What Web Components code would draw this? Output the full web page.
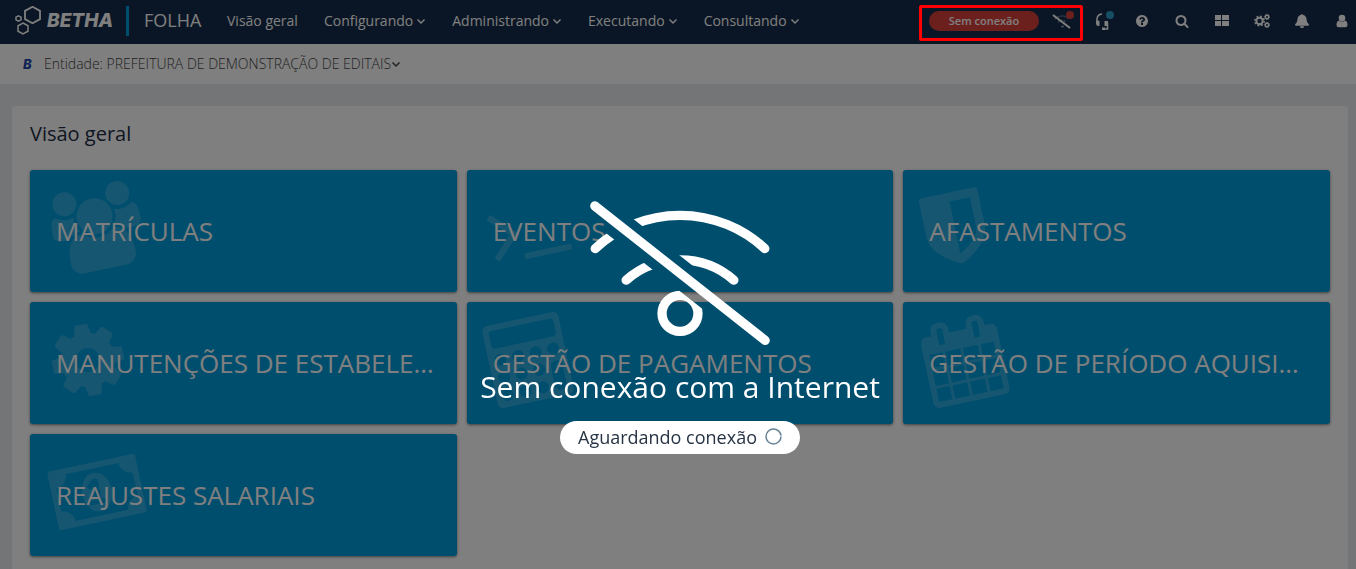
<!DOCTYPE html>
<html lang="pt-BR">
<head>
<meta charset="utf-8">
<meta name="viewport" content="width=device-width, initial-scale=1">
<title>Betha Folha</title>
<style>
  html, body { margin: 0; height: 100%; }
  body { font-family: "Open Sans", "Noto Sans", sans-serif; font-size: 14px; overflow: hidden; }
</style>
</head>
<body>
<folha-app></folha-app>

<script>
const ICONS = {
  users: ['0 0 1920 1792', '<path d="M593 896q-162 5-265 128h-134q-82 0-138-40.5t-56-118.5q0-353 124-353 6 0 43.500 21t97.500 42.500 119 21.500q67 0 133-23-5 37-5 66 0 139 81 256zm1071 637q0 120-73 189.500t-194 69.500h-874q-121 0-194-69.500t-73-189.500q0-53 3.500-103.500t14-109 26.500-108.500 43-97.500 62-81 85.500-53.500 111.500-20q10 0 43 21.500t73 48 107 48 135 21.500 135-21.500 107-48 73-48 43-21.500q61 0 111.500 20t85.500 53.500 62 81 43 97.500 26.500 108.500 14 109 3.500 103.500zm-1024-1277q0 106-75 181t-181 75-181-75-75-181 75-181 181-75 181 75 75 181zm704 384q0 159-112.500 271.500t-271.500 112.500-271.500-112.500-112.500-271.500 112.500-271.500 271.500-112.500 271.500 112.500 112.500 271.500zm576 225q0 78-56 118.500t-138 40.500h-134q-103-123-265-128 81-117 81-256 0-29-5-66 66 23 133 23 59 0 119-21.500t97.500-42.500 43.500-21q124 0 124 353zm-128-609q0 106-75 181t-181 75-181-75-75-181 75-181 181-75 181 75 75 181z"/>'],
  cog: ['128 0 1536 1792', '<path d="M1152 896q0-106-75-181t-181-75-181 75-75 181 75 181 181 75 181-75 75-181zm512-109v222q0 12-8 23t-20 13l-185 28q-19 54-39 91 35 50 107 138 10 12 10 25t-9 23q-27 37-99 108t-94 71q-12 0-26-9l-138-108q-44 23-91 38-16 136-29 186-7 28-36 28h-222q-14 0-24.500-8.500t-11.500-21.500l-28-184q-49-16-90-37l-141 107q-10 9-25 9-14 0-25-11-126-114-165-168-7-10-7-23 0-12 8-23 15-21 51-66.500t54-70.500q-27-50-41-99l-183-27q-13-2-21-12.500t-8-23.500v-222q0-12 8-23t19-13l186-28q14-46 39-92-40-57-107-138-10-12-10-24 0-10 9-23 26-36 98.500-107.500t94.500-71.500q13 0 26 10l138 107q44-23 91-38 16-136 29-186 7-28 36-28h222q14 0 24.500 8.500t11.500 21.500l28 184q49 16 90 37l142-107q9-9 24-9 13 0 25 10 129 119 165 170 7 8 7 22 0 12-8 23-15 21-51 66.500t-54 70.500q26 50 41 98l183 28q13 2 21 12.500t8 23.500z"/>'],
  shield: ['256 0 1280 1792', '<path d="M1344 960v-640h-448v1137q119-63 213-137 235-184 235-360zm192-768v768q0 86-33.500 170.500t-83 150-118 127.500-126.500 103-121 77.500-89.500 49.500-42.500 20q-12 6-26 6t-26-6q-16-7-42.500-20t-89.500-49.500-121-77.500-126.500-103-118-127.500-83-150-33.500-170.500v-768q0-26 19-45t45-19h1152q26 0 45 19t19 45z"/>'],
  terminal: ['64 0 1664 1792', '<path d="M649 983l-466 466q-10 10-23 10t-23-10l-50-50q-10-10-10-23t10-23l393-393-393-393q-10-10-10-23t10-23l50-50q10-10 23-10t23 10l466 466q10 10 10 23t-10 23zm1079 457v64q0 14-9 23t-23 9h-960q-14 0-23-9t-9-23v-64q0-14 9-23t23-9h960q14 0 23 9t9 23z"/>'],
  calculator: ['0 0 1664 1792', '<path fill-rule="evenodd" d="M128 0h1408a128 128 0 0 1 128 128v1536a128 128 0 0 1-128 128h-1408a128 128 0 0 1-128-128v-1536a128 128 0 0 1 128-128zM192 128a64 64 0 0 0-64 64v256a64 64 0 0 0 64 64h1280a64 64 0 0 0 64-64v-256a64 64 0 0 0-64-64zM128 768a128 128 0 0 0 256 0a128 128 0 0 0-256 0zM512 768a128 128 0 0 0 256 0a128 128 0 0 0-256 0zM896 768a128 128 0 0 0 256 0a128 128 0 0 0-256 0zM1280 768a128 128 0 0 0 256 0a128 128 0 0 0-256 0zM128 1152a128 128 0 0 0 256 0a128 128 0 0 0-256 0zM512 1152a128 128 0 0 0 256 0a128 128 0 0 0-256 0zM896 1152a128 128 0 0 0 256 0a128 128 0 0 0-256 0zM128 1536a128 128 0 0 0 256 0a128 128 0 0 0-256 0zM512 1536a128 128 0 0 0 256 0a128 128 0 0 0-256 0zM896 1536a128 128 0 0 0 256 0a128 128 0 0 0-256 0zM1280 1152v384a128 128 0 0 0 256 0v-384a128 128 0 0 0-256 0z"/>'],
  calendar: ['64 0 1664 1792', '<path d="M192 1664h288v-288h-288v288zm352 0h320v-288h-320v288zm-352-352h288v-320h-288v320zm352 0h320v-320h-320v320zm-352-384h288v-288h-288v288zm736 736h320v-288h-320v288zm-384-736h320v-288h-320v288zm768 736h288v-288h-288v288zm-384-352h320v-320h-320v320zm-352-864v-288q0-13-9.500-22.500t-22.500-9.500h-64q-13 0-22.500 9.500t-9.500 22.500v288q0 13 9.500 22.500t22.500 9.500h64q13 0 22.500-9.500t9.500-22.500zm736 864h288v-320h-288v320zm-384-384h320v-288h-320v288zm384 0h288v-288h-288v288zm32-480v-288q0-13-9.500-22.500t-22.500-9.500h-64q-13 0-22.500 9.500t-9.500 22.500v288q0 13 9.500 22.500t22.500 9.500h64q13 0 22.500-9.500t9.500-22.500zm384-64v1280q0 52-38 90t-90 38h-1408q-52 0-90-38t-38-90v-1280q0-52 38-90t90-38h128v-96q0-66 47-113t113-47h64q66 0 113 47t47 113v96h384v-96q0-66 47-113t113-47h64q66 0 113 47t47 113v96h128q52 0 90 38t38 90z"/>'],
  money: ['0 0 1920 1792', '<path d="M768 1152h384v-96h-128v-448h-114l-148 137 77 80q42-37 55-57h2v288h-128v96zm512-256q0 70-21 142t-59.500 134-101.500 101-138 39-138-39-101.500-101-59.500-134-21-142 21-142 59.500-134 101.500-101 138-39 138 39 101.500 101 59.500 134 21 142zm512 256v-512q-106 0-181-75t-75-181h-1152q0 106-75 181t-181 75v512q106 0 181 75t75 181h1152q0-106 75-181t181-75zm128-832v1152q0 26-19 45t-45 19h-1792q-26 0-45-19t-19-45v-1152q0-26 19-45t45-19h1792q26 0 45 19t19 45z"/>'],
  chevron: ['0 0 10 10', '<path d="M1.500 3.500L5 7l3.500-3.500" fill="none" stroke="currentColor" stroke-width="1.500"/>'],
  offline: ['0 0 20 20', '<g fill="none" stroke="currentColor"><path d="M3 8q7-6 14 0M6 11q4-3 8 0" stroke-width="1.500" stroke-dasharray="2 1" opacity=".4"/><path d="M9 15.500h3" stroke-width="1.500" opacity=".5"/><path d="M1 4l17 13" stroke-width="2"/></g>'],
  headset: ['0 0 20 20', '<path d="M5 11V8.500q0-5 5-5.500M15.500 12v6H11" fill="none" stroke="currentColor" stroke-width="1.500"/><path d="M4 9.500h1.500l2 .5v5H6q-2-.5-2-2.500zM12.500 10H16v3q0 2-1.500 2h-2zM10 16.500h3V19h-3z" fill="currentColor"/>'],
  help: ['0 0 1792 1792', '<path fill="currentColor" d="M1024 1376v-192q0-14-9-23t-23-9h-192q-14 0-23 9t-9 23v192q0 14 9 23t23 9h192q14 0 23-9t9-23zm256-672q0-88-55.500-163t-138.500-116-170-41q-243 0-371 213-15 24 8 42l132 100q7 6 19 6 16 0 25-12 53-68 86-92 34-24 86-24 48 0 85.500 26t37.500 59q0 38-20 61t-68 45q-63 28-115.500 86.500t-52.500 125.500v36q0 14 9 23t23 9h192q14 0 23-9t9-23q0-19 21.500-49.500t54.500-49.500q32-18 49-28.500t46-35 44.500-48 28-60.500 12.500-81zm384 192q0 209-103 385.500t-279.500 279.500-385.500 103-385.500-103-279.500-279.500-103-385.500 103-385.500 279.500-279.500 385.500-103 385.500 103 279.500 279.500 103 385.500z"/>'],
  search: ['0 0 1792 1792', '<path fill="currentColor" d="M1216 832q0-185-131.500-316.500t-316.500-131.500-316.500 131.500-131.500 316.500 131.500 316.500 316.500 131.500 316.500-131.500 131.500-316.500zm512 832q0 52-38 90t-90 38q-54 0-90-38l-343-342q-179 124-399 124-143 0-273.500-55.500t-225-150-150-225-55.500-273.500 55.500-273.500 150-225 225-150 273.500-55.500 273.500 55.500 225 150 150 225 55.500 273.500q0 220-124 399l343 343q37 37 37 90z"/>'],
  grid: ['0 0 14 14', '<path fill="currentColor" d="M0 1h6v5H0zM7 1h7v5H7zM0 7h6v5H0zM7 7h7v5H7z"/>'],
  cogs: ['0 0 16 16', '<g fill="none" stroke="currentColor"><circle cx="5.500" cy="8" r="3.200" stroke-width="2"/><circle cx="5.500" cy="8" r="4.700" stroke-width="1.500" stroke-dasharray="1.900 1.790"/><circle cx="13" cy="4" r="1.700" stroke-width="1.400"/><circle cx="13" cy="4" r="2.600" stroke-dasharray="1.100 .94"/><circle cx="13" cy="12" r="1.700" stroke-width="1.400"/><circle cx="13" cy="12" r="2.600" stroke-dasharray="1.100 .94"/></g>'],
  bell: ['0 0 14 14', '<path fill="currentColor" d="M6.300.7a.7.7 0 0 1 1.400 0Q11.200 1.500 11.500 5q.1 4 2.500 5.500 0 1-.8 1.200H.8Q0 11.500 0 10.500 2.400 9 2.500 5q.3-3.500 3.800-4.300zM5 12.200h4a2 2 0 0 1-4 0z"/>'],
  user: ['0 0 12 14', '<path fill="currentColor" d="M6 .8a3.300 3.300 0 0 1 0 6.600A3.300 3.300 0 0 1 6 .8zM3 6.500q3 2.600 6 0Q11.500 7 11.500 11q0 2.300-2 2.300h-7q-2 0-2-2.300 0-4 2.500-4.500z"/>']
};

const define = (name, css, html) => customElements.define(name, class extends HTMLElement {
  connectedCallback() {
    if (this.shadowRoot) return;
    const root = this.attachShadow({ mode: 'open' });
    const markup = typeof html === 'function' ? html(this) : html;
    root.innerHTML = `<style>*{box-sizing:border-box}${css}</style>${markup}`;
  }
});

define('ui-icon',
  ':host{display:inline-flex;flex:none}svg{display:block;width:100%;height:100%;fill:currentColor}',
  el => { const [box, art] = ICONS[el.getAttribute('name')]; return `<svg viewBox="${box}" aria-hidden="true">${art}</svg>`; });

define('nav-item', `
  :host{display:block}
  a{display:flex;align-items:center;gap:3px;color:#fff;text-decoration:none;font-size:14px;line-height:20px;white-space:nowrap}
  ui-icon{width:10px;height:10px}`,
  el => `<a href="#"><slot></slot>${el.hasAttribute('menu') ? '<ui-icon name="chevron"></ui-icon>' : ''}</a>`);

define('tool-button', `
  :host{display:block;position:relative}
  button{display:flex;align-items:center;justify-content:center;width:40px;height:40px;padding:0;border:0;background:none;color:#fff}
  ui-icon{width:var(--size,14px);height:var(--size,14px)}
  i{position:absolute;top:10px;right:8px;width:8px;height:8px;border-radius:50%;background:var(--badge)}`,
  el => `<button type="button" aria-label="${el.getAttribute('label')}"><ui-icon name="${el.getAttribute('icon')}"></ui-icon></button>${el.hasAttribute('badge') ? '<i></i>' : ''}`);

define('betha-logo', `
  :host{display:block}
  a{display:flex;align-items:center;gap:5px;color:#fff;text-decoration:none}
  svg{width:28px;height:30px;fill:none;stroke:currentColor;stroke-width:1.500}
  b{width:66px;font:italic 800 19px/28px Inter,sans-serif}`,
  `<a href="#"><svg viewBox="0 0 28 30" aria-hidden="true">
    <path d="M18.500.8l7.500 4.100v8.200l-7.500 4.100-7.500-4.100V4.900z" stroke-width="1.800"/>
    <path d="M9 17l5 2.800v5.400L9 28l-5-2.800v-5.400z"/>
    <path d="M4.500 9.800L7 11.200v2.600l-2.500 1.400L2 13.800v-2.600z"/>
  </svg><b>BETHA</b></a>`);

define('top-bar', `
  :host{display:flex;align-items:center;height:44px;padding:0 0 2px 14px;background:#142c4a;color:#fff}
  .bar{width:3px;height:30px;margin:0 15px 0 13px;background:#009cdc}
  .product{width:83px;font-size:18px;line-height:24px;padding-bottom:2px}
  nav{display:flex;gap:26px;flex:1}
  .status{width:110px;height:20px;margin-right:3px;border:0;border-radius:10px;background:#d8413b;color:#fff;font:600 11px/20px "Open Sans",sans-serif;padding:0}
  .tools{display:flex;margin-right:-6px}`,
  `<betha-logo></betha-logo><span class="bar"></span><span class="product">FOLHA</span>
  <nav><nav-item>Visão geral</nav-item><nav-item menu>Configurando</nav-item><nav-item menu>Administrando</nav-item><nav-item menu>Executando</nav-item><nav-item menu>Consultando</nav-item></nav>
  <button class="status" type="button">Sem conexão</button>
  <div class="tools">
    <tool-button icon="offline" label="Conexão" badge style="--size:20px;--badge:#d8413b"></tool-button>
    <tool-button icon="headset" label="Suporte" badge style="--size:20px;--badge:#2c9cc8"></tool-button>
    <tool-button icon="help" label="Ajuda"></tool-button>
    <tool-button icon="search" label="Pesquisar"></tool-button>
    <tool-button icon="grid" label="Aplicativos"></tool-button>
    <tool-button icon="cogs" label="Configurações" style="--size:16px"></tool-button>
    <tool-button icon="bell" label="Notificações"></tool-button>
    <tool-button icon="user" label="Usuário"></tool-button>
  </div>`);

define('entity-bar', `
  :host{display:flex;align-items:center;gap:10px;height:40px;padding:0 23px;background:#fff}
  b{width:11px;font:italic 800 13px/20px Inter,sans-serif;color:#1c48a8}
  button{display:flex;align-items:center;padding:0;border:0;background:none;font:350 14px/20px "Open Sans",sans-serif;color:#444}
  ui-icon{width:10px;height:10px}`,
  `<b>B</b><button type="button"><span>Entidade: <slot></slot></span><ui-icon name="chevron"></ui-icon></button>`);

define('menu-card', `
  :host{display:block;min-width:0}
  a{position:relative;display:flex;align-items:center;height:122px;padding:0 20px 0 26px;border-radius:3px;background:#009cdc;box-shadow:0 1px 3px rgba(0,0,0,.5);color:#fff;text-decoration:none}
  ui-icon{position:absolute;left:22px;top:16px;height:84px;transform:rotate(-12deg);color:rgba(255,255,255,.18)}
  span{position:relative;overflow:hidden;text-overflow:ellipsis;white-space:nowrap;font-size:26px;line-height:36px}`,
  el => { const name = el.getAttribute('icon'); return `<a href="#"><ui-icon name="${name}" style="aspect-ratio:${ICONS[name][0].split(' ').slice(2).join('/')}"></ui-icon><span><slot></slot></span></a>`; });

define('overview-panel', `
  :host{display:block;margin:22px 8px 0 12px;padding:14px 18px 18px;border-radius:3px;background:#fff}
  h1{margin:0 0 22px;font-size:20px;line-height:28px;font-weight:400;color:#1c2c44}
  .grid{display:grid;grid-template-columns:repeat(3,minmax(0,1fr));gap:10px}`,
  `<h1>Visão geral</h1><div class="grid"><slot></slot></div>`);

define('offline-overlay', `
  :host{position:fixed;inset:0;display:flex;flex-direction:column;align-items:center;padding:201px 0 0 4px;background:rgba(0,0,0,.5);color:#fff}
  .wifi{width:180px;height:144px;fill:none;stroke:#fff;stroke-width:28;stroke-linecap:round}
  p{margin:20px 0 12px;font-size:30px;line-height:44px}
  .wait{display:flex;align-items:center;gap:8px;height:33px;padding:0 18px 2px;border-radius:17px;background:#fff;color:#263445;font-size:18px;line-height:24px}
  .wait svg{width:17px;height:17px;fill:none;stroke:#698496;stroke-width:1.500}`,
  `<svg class="wifi" viewBox="390 122 540 433" role="img" aria-label="Sem rede">
    <mask id="cut" maskUnits="userSpaceOnUse" x="380" y="110" width="560" height="460"><rect x="380" y="110" width="560" height="460" fill="#fff" stroke="none"/><path d="M322 74L998 606" stroke="#000" stroke-width="84"/></mask>
    <g mask="url(#cut)"><path d="M405 265A375 375 0 0 1 915 265"/><path d="M498 360A246 246 0 0 1 822 360"/><circle cx="660" cy="460" r="54"/></g>
    <path d="M404 137L916 541"/>
  </svg>
  <p>Sem conexão com a Internet</p>
  <div class="wait" role="status">Aguardando conexão<svg viewBox="0 0 17 17" aria-hidden="true"><circle cx="8.500" cy="8.500" r="7.500" stroke-dasharray="46 1.100"/></svg></div>`);

define('attention-frame', `
  :host{position:fixed;box-sizing:border-box;top:5px;right:273px;width:164px;height:36px;border:3px solid #f00;border-radius:2px;pointer-events:none}`, '');

define('folha-app', `
  :host{display:block;min-height:100vh;background:#e9ebee}`,
  `<header><top-bar></top-bar><entity-bar>PREFEITURA DE DEMONSTRAÇÃO DE EDITAIS</entity-bar></header>
  <main><overview-panel>
    <menu-card icon="users">MATRÍCULAS</menu-card>
    <menu-card icon="terminal">EVENTOS</menu-card>
    <menu-card icon="shield">AFASTAMENTOS</menu-card>
    <menu-card icon="cog">MANUTENÇÕES DE ESTABELECIMENTOS</menu-card>
    <menu-card icon="calculator">GESTÃO DE PAGAMENTOS</menu-card>
    <menu-card icon="calendar">GESTÃO DE PERÍODO AQUISITIVO</menu-card>
    <menu-card icon="money">REAJUSTES SALARIAIS</menu-card>
  </overview-panel></main>
  <offline-overlay></offline-overlay>
  <attention-frame></attention-frame>`);
</script>
</body>
</html>
